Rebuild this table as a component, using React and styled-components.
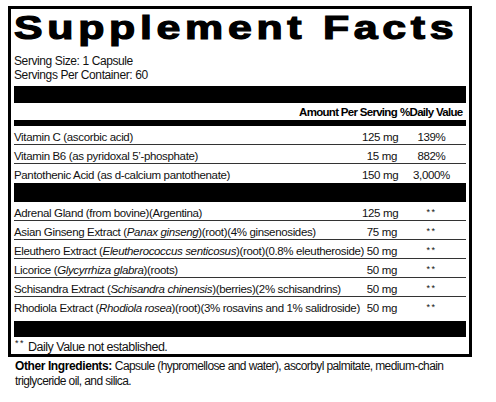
import React from "react";
import styled, { createGlobalStyle } from "styled-components";

const GlobalStyle = createGlobalStyle`
  html, body {
    margin: 0;
    padding: 0;
    background: #ffffff;
  }
  body {
    font-family: "Liberation Sans", Arial, sans-serif;
    color: #111111;
  }
`;

const Page = styled.div`
  width: 496px;
  height: 402px;
  padding: 6px 0 0 8px;
  box-sizing: border-box;
  overflow: hidden;
`;

const Label = styled.div`
  width: 464px;
  box-sizing: border-box;
  border: 3px solid #000;
  padding: 0 3px;
  display: flex;
  flex-direction: column;
`;

const Title = styled.h1`
  margin: 2px 0 9px;
  font-size: 33px;
  line-height: 34px;
  font-weight: 900;
  letter-spacing: 3.6px;
  color: #000;
  -webkit-text-stroke: 1.2px #000;
  white-space: nowrap;
  transform: scaleX(1.3);
  transform-origin: left center;
`;

const Serving = styled.div`
  font-size: 12px;
  line-height: 14px;
  letter-spacing: -0.4px;
`;

const Bar = styled.div`
  height: ${(p) => p.$h}px;
  margin-top: ${(p) => p.$mt || 0}px;
  background: #000;
`;

const Grid = styled.div`
  display: grid;
  grid-template-columns: 348px 35px 69px;
  white-space: nowrap;
`;

const HeaderRow = styled(Grid)`
  height: 17px;
  font-weight: 700;
  font-size: 11.5px;
  line-height: 18px;
  letter-spacing: -0.7px;
  color: #000;
`;

const Row = styled(Grid)`
  height: 19px;
  padding-top: 4px;
  box-sizing: border-box;
  font-size: 11.5px;
  line-height: 14px;
  letter-spacing: -0.35px;
  border-bottom: 1px solid #333;

  &:last-child {
    border-bottom: none;
  }
`;

const Name = styled.span`
  overflow: visible;
`;

const Amount = styled.span`
  text-align: right;
`;

const HeadAmount = styled.span`
  grid-column: 1 / 3;
  text-align: right;
`;

const Dv = styled.span`
  text-align: ${(p) => (p.$left ? "left" : "center")};
  padding-left: ${(p) => (p.$left ? "3px" : "0")};
`;

const Stars = styled.span`
  font-size: 9px;
  letter-spacing: 1.5px;
  vertical-align: top;
  line-height: 12px;
`;

const Group = styled.div`
  display: flex;
  flex-direction: column;
`;

const Footnote = styled.div`
  height: 17px;
  font-size: 12.5px;
  line-height: 20px;
  letter-spacing: -0.5px;
  padding-left: 1px;
`;

const Other = styled.p`
  margin: 2px 0 0;
  padding-left: 7px;
  width: 440px;
  font-size: 12px;
  line-height: 15px;
  letter-spacing: -0.6px;
`;

const OtherLabel = styled.strong`
  font-weight: 700;
  letter-spacing: -0.4px;
  color: #000;
  margin-right: 3px;
`;

const vitamins = [
  { name: "Vitamin C (ascorbic acid)", amount: "125 mg", dv: "139%" },
  { name: "Vitamin B6 (as pyridoxal 5’-phosphate)", amount: "15 mg", dv: "882%" },
  { name: "Pantothenic Acid (as d-calcium pantothenate)", amount: "150 mg", dv: "3,000%" },
];

const blend = [
  { name: ["Adrenal Gland (from bovine)(Argentina)"], amount: "125 mg" },
  { name: ["Asian Ginseng Extract (", "Panax ginseng", ")(root)(4% ginsenosides)"], amount: "75 mg" },
  { name: ["Eleuthero Extract (", "Eleutherococcus senticosus", ")(root)(0.8% eleutheroside)"], amount: "50 mg" },
  { name: ["Licorice (", "Glycyrrhiza glabra", ")(roots)"], amount: "50 mg" },
  { name: ["Schisandra Extract (", "Schisandra chinensis", ")(berries)(2% schisandrins)"], amount: "50 mg" },
  { name: ["Rhodiola Extract (", "Rhodiola rosea", ")(root)(3% rosavins and 1% salidroside)"], amount: "50 mg" },
];

function App() {
  return (
    <Page>
      <GlobalStyle />
      <Label>
        <Title>Supplement Facts</Title>
        <Serving>Serving Size: 1 Capsule</Serving>
        <Serving>Servings Per Container: 60</Serving>
        <Bar $h={17} $mt={4} />
        <HeaderRow>
          <HeadAmount>Amount Per Serving</HeadAmount>
          <Dv $left>%Daily Value</Dv>
        </HeaderRow>
        <Bar $h={6} />
        <Group>
          {vitamins.map((v) => (
            <Row key={v.name}>
              <Name>{v.name}</Name>
              <Amount>{v.amount}</Amount>
              <Dv>{v.dv}</Dv>
            </Row>
          ))}
        </Group>
        <Bar $h={19} />
        <Group>
          {blend.map((b) => (
            <Row key={b.name.join("")}>
              <Name>
                {b.name[0]}
                {b.name[1] && <i>{b.name[1]}</i>}
                {b.name[2]}
              </Name>
              <Amount>{b.amount}</Amount>
              <Dv>
                <Stars>**</Stars>
              </Dv>
            </Row>
          ))}
        </Group>
        <Bar $h={16} $mt={5} />
        <Footnote>
          <Stars>**</Stars> Daily Value not established.
        </Footnote>
      </Label>
      <Other>
        <OtherLabel>Other Ingredients:</OtherLabel>Capsule (hypromellose and water), ascorbyl
        palmitate, medium-chain triglyceride oil, and silica.
      </Other>
    </Page>
  );
}

export default App;
